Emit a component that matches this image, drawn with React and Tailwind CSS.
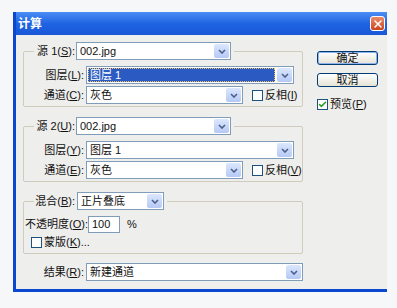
import { Check, X } from "lucide-react";

const Key = ({ children }) => <span className="underline">{children}</span>;

const Arrow = () => (
  <div className="m-px flex w-[15px] items-center justify-center rounded-[2px] bg-gradient-to-b from-[#dce7fd] to-[#b5c9f5]">
    <svg width="8" height="5" viewBox="0 0 8 5">
      <path d="M1 1 L4 4 L7 1" fill="none" stroke="#4a5f8a" strokeWidth="1.6" />
    </svg>
  </div>
);

const Select = ({ value, width, selected }) => (
  <div
    className={`flex h-[18px] shrink-0 border border-[#7f9db9] bg-white ${width}`}
  >
    {selected ? (
      <div className="m-px flex flex-1 items-center bg-[#2b5bc2] pl-[2px] text-white outline-1 outline-dotted outline-[#f0c060] -outline-offset-1">
        {value}
      </div>
    ) : (
      <div className="flex flex-1 items-center pl-[3px]">{value}</div>
    )}
    <Arrow />
  </div>
);

const CheckBox = ({ checked, children }) => (
  <div className="flex items-center gap-[2px]">
    <div className="flex h-[11px] w-[11px] items-center justify-center border border-[#1c5180] bg-white">
      {checked && <Check size={9} strokeWidth={4} className="text-[#21a121]" />}
    </div>
    <span className="whitespace-nowrap">{children}</span>
  </div>
);

const Row = ({ label, children }) => (
  <div className="flex h-[18px] items-center">
    <div className="w-[62px] whitespace-nowrap pr-[2px] text-right">{label}</div>
    {children}
  </div>
);

const Legend = ({ label, children }) => (
  <legend className="ml-[10px] flex items-center pr-[3px]">
    <span className="w-[42px] whitespace-nowrap pr-px text-right">{label}</span>
    {children}
  </legend>
);

const Button = ({ children, main }) => (
  <div
    className={`flex h-[14px] w-[61px] items-center justify-center rounded-[3px] border border-[#003c74] bg-gradient-to-b from-white to-[#e6e3d6] ${main ? "shadow-[inset_0_0_0_1px_#8fb3f0]" : ""}`}
  >
    {children}
  </div>
);

const SourceGroup = ({ num, k1, k2, k3, k4, selected, className }) => (
  <fieldset className={`rounded-[2px] border border-[#cfccbd] px-0 pb-[2px] ${className}`}>
    <Legend
      label={
        <>
          源 {num}(<Key>{k1}</Key>):
        </>
      }
    >
      <Select value="002.jpg" width="w-[155px]" />
    </Legend>
    <div className="mt-[6px] flex flex-col gap-[2px]">
      <Row
        label={
          <>
            图层(<Key>{k2}</Key>):
          </>
        }
      >
        <Select value="图层 1" width="w-[208px]" selected={selected} />
      </Row>
      <Row
        label={
          <>
            通道(<Key>{k3}</Key>):
          </>
        }
      >
        <Select value="灰色" width="w-[157px]" />
        <div className="ml-[9px]">
          <CheckBox>
            反相(<Key>{k4}</Key>)
          </CheckBox>
        </div>
      </Row>
    </div>
  </fieldset>
);

export default function App() {
  return (
    <div className="h-[308px] w-[397px] bg-[#f6f7f9] pl-[13px] pt-[12px] font-['Liberation_Sans','Noto_Sans_CJK_SC',sans-serif] text-[11px] leading-none text-[#111]">
      <div className="flex h-[280px] w-[374px] flex-col border-b-[3px] border-l-[3px] border-[#0b47cf] bg-[#eeeeec]">
        <div className="flex h-[23px] items-center justify-between bg-gradient-to-b from-[#4a8ef5] via-[#2064e2] to-[#1856d8] pl-[2px] pr-[2px]">
          <span className="text-[12px] font-bold text-white">计算</span>
          <div className="flex h-[15px] w-[15px] items-center justify-center rounded-[3px] border border-white bg-gradient-to-b from-[#eb8a66] to-[#c9431e]">
            <X size={12} strokeWidth={3} className="text-white" />
          </div>
        </div>

        <div className="flex flex-1">
          <div className="ml-[7px] flex w-[280px] flex-col">
            <SourceGroup num="1" k1="S" k2="L" k3="C" k4="I" selected className="mt-[7px]" />
            <SourceGroup num="2" k1="U" k2="Y" k3="E" k4="V" className="mt-[10px]" />

            <fieldset className="mt-[10px] rounded-[2px] border border-[#cfccbd] pb-[5px]">
              <Legend
                label={
                  <>
                    混合(<Key>B</Key>):
                  </>
                }
              >
                <div className="ml-px">
                  <Select value="正片叠底" width="w-[87px]" />
                </div>
              </Legend>
              <div className="mt-[6px] flex h-[17px] items-center">
                <span className="ml-px w-[63px] shrink-0 whitespace-nowrap">
                  不透明度(<Key>O</Key>):
                </span>
                <div className="flex h-[17px] w-[32px] items-center border border-[#7f9db9] bg-white pl-[3px]">
                  100
                </div>
                <span className="ml-[7px]">%</span>
              </div>
              <div className="ml-[7px] mt-[4px] flex h-[11px] items-center">
                <CheckBox>
                  蒙版(<Key>K</Key>)...
                </CheckBox>
              </div>
            </fieldset>

            <div className="mt-[9px] flex h-[18px] items-center">
              <div className="w-[63px] whitespace-nowrap pr-[2px] text-right">
                结果(<Key>R</Key>):
              </div>
              <Select value="新建通道" width="w-[217px]" />
            </div>
          </div>

          <div className="ml-[14px] mt-[16px] flex flex-col">
            <Button main>确定</Button>
            <div className="mt-[8px]">
              <Button>取消</Button>
            </div>
            <div className="mt-[12px] h-[11px]">
              <CheckBox checked>
                预览(<Key>P</Key>)
              </CheckBox>
            </div>
          </div>
        </div>
      </div>
    </div>
  );
}
